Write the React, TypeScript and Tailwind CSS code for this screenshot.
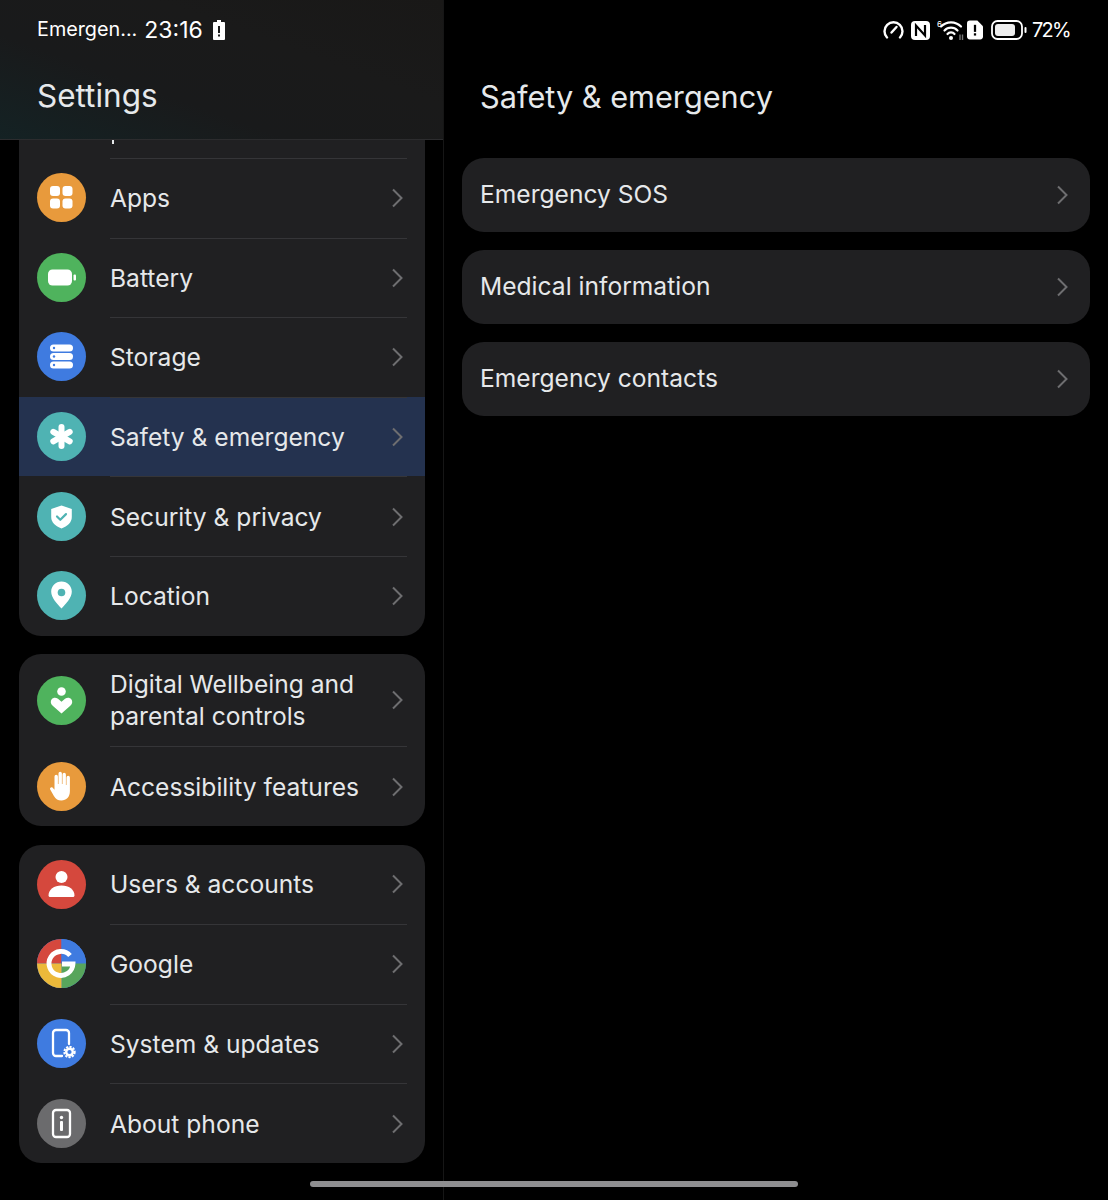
import type { ReactNode } from "react"

// Small glyphs that sit inside the round setting icons (49 unit box)
const glyphs: Record<string, ReactNode> = {
  apps: (
    <g fill="#fff">
      <rect x="13" y="13" width="10" height="10" rx="3" />
      <rect x="25.500" y="13" width="10" height="10" rx="3" />
      <rect x="13" y="25.500" width="10" height="10" rx="3" />
      <rect x="25.500" y="25.500" width="10" height="10" rx="3" />
    </g>
  ),
  battery: (
    <g fill="#fff">
      <rect x="11" y="16.500" width="24" height="16" rx="4.500" />
      <rect x="36.500" y="21.500" width="2.500" height="6" rx="1" />
    </g>
  ),
  storage: (
    <g>
      <rect x="13" y="12.500" width="23" height="7" rx="3.500" fill="#fff" />
      <rect x="13" y="21" width="23" height="7" rx="3.500" fill="#fff" />
      <rect x="13" y="29.500" width="23" height="7" rx="3.500" fill="#fff" />
      <circle cx="17" cy="16" r="1.200" fill="#3f7be0" />
      <circle cx="17" cy="24.500" r="1.200" fill="#3f7be0" />
      <circle cx="17" cy="33" r="1.200" fill="#3f7be0" />
    </g>
  ),
  safety: (
    <g stroke="#fff" strokeWidth="6" strokeLinecap="round">
      <path d="M24.500 15v19" />
      <path d="M16.300 19.800l16.400 9.500" />
      <path d="M16.300 29.300l16.400-9.500" />
    </g>
  ),
  security: (
    <g>
      <path d="M24.500 13.500l10.300 3.500v8c0 5.500-4.300 9.200-10.300 11.500-6-2.300-10.300-6-10.300-11.500v-8z" fill="#fff" />
      <path d="M20 24.500l3.300 3.300 5.700-5.700" fill="none" stroke="#4fb3b3" strokeWidth="2.200" strokeLinecap="round" strokeLinejoin="round" />
    </g>
  ),
  location: (
    <g>
      <path d="M24.500 10.500c-5.900 0-10.300 4.400-10.300 10.200 0 6.300 6 12 10.300 16.800 4.300-4.800 10.300-10.500 10.300-16.800 0-5.800-4.400-10.200-10.300-10.200z" fill="#fff" />
      <circle cx="24.500" cy="21.500" r="3.800" fill="#4fb3b3" />
    </g>
  ),
  wellbeing: (
    <g fill="#fff">
      <circle cx="24.500" cy="15.500" r="4.300" />
      <path d="M24.500 37.500l-8.800-7.700c-2.200-2-2.500-4.700-1-6.600 1.600-2 4.300-2 6.300-.4l3.500 3 3.500-3c2-1.600 4.700-1.600 6.300.4 1.500 1.900 1.200 4.600-1 6.600z" />
    </g>
  ),
  hand: (
    <path
      d="M17.500 21v-6.500a1.700 1.700 0 0 1 3.400 0V22h.6V11.500a1.700 1.700 0 0 1 3.400 0V22h.6V12.500a1.700 1.700 0 0 1 3.400 0V23h.6v-7.500a1.700 1.700 0 0 1 3.400 0V29c0 6-3.500 9.500-8.500 9.500-3.500 0-5.700-1.500-7.500-4.500l-3.700-6.500c-.9-1.600 1.300-3 2.500-1.700l1.800 2z"
      fill="#fff"
    />
  ),
  user: (
    <g fill="#fff">
      <circle cx="24.500" cy="17" r="6" />
      <path d="M13 37c-.8 0-1.500-.7-1.500-1.500 0-6 5.500-10 13-10s13 4 13 10c0 .8-.7 1.500-1.500 1.500z" />
    </g>
  ),
  google: (
    <g>
      <path d="M24.500 0A24.500 24.500 0 0 0 0 24.500h24.500z" fill="#d5483d" />
      <path d="M24.500 0A24.500 24.500 0 0 1 49 24.500H24.500z" fill="#3f7be0" />
      <path d="M49 24.500A24.500 24.500 0 0 1 24.500 49V24.500z" fill="#57a55c" />
      <path d="M24.500 49A24.500 24.500 0 0 1 0 24.500h24.500z" fill="#ecb93a" />
      <path d="M33 16.500A12 12 0 1 0 36 25h-11" fill="none" stroke="#fff" strokeWidth="4.800" />
    </g>
  ),
  system: (
    <g>
      <path d="M25 37h-6a3 3 0 0 1-3-3V14a3 3 0 0 1 3-3h10a3 3 0 0 1 3 3v11" fill="none" stroke="#fff" strokeWidth="2.300" strokeLinecap="round" />
      <circle cx="32.500" cy="33" r="5.200" fill="none" stroke="#fff" strokeWidth="2" strokeDasharray="2.200 1.200" />
      <circle cx="32.500" cy="33" r="3.300" fill="none" stroke="#fff" strokeWidth="2.400" />
    </g>
  ),
  about: (
    <g>
      <rect x="16" y="11" width="17" height="27" rx="3" fill="none" stroke="#fff" strokeWidth="2.300" />
      <circle cx="24.500" cy="18.500" r="1.700" fill="#fff" />
      <rect x="23" y="22" width="3" height="10" rx="1" fill="#fff" />
    </g>
  ),
}

const rowsA = [
  { title: "Apps", icon: "apps", color: "bg-[#e89a3c]" },
  { title: "Battery", icon: "battery", color: "bg-[#4fb35d]" },
  { title: "Storage", icon: "storage", color: "bg-[#3f7be0]" },
  { title: "Safety & emergency", icon: "safety", color: "bg-[#4fb3b3]", active: true },
  { title: "Security & privacy", icon: "security", color: "bg-[#4fb3b3]" },
  { title: "Location", icon: "location", color: "bg-[#4fb3b3]" },
]

const rowsB = [
  { title: "Users & accounts", icon: "user", color: "bg-[#d5483d]" },
  { title: "Google", icon: "google", color: "bg-[#3f7be0]" },
  { title: "System & updates", icon: "system", color: "bg-[#3f7be0]" },
  { title: "About phone", icon: "about", color: "bg-[#6b6b6d]" },
]

function Chevron({ className }: { className?: string }) {
  return (
    <svg width="13" height="20" viewBox="0 0 13 20" className={className}>
      <path d="M2 1.500L10.500 10 2 18.500" fill="none" stroke="#6e6e70" strokeWidth="2" />
    </svg>
  )
}

function SettingRow({
  title,
  icon,
  color,
  active,
  first,
  tall,
}: {
  title: ReactNode
  icon: string
  color: string
  active?: boolean
  first?: boolean
  tall?: boolean
}) {
  return (
    <div className={`flex items-center pl-[18px] ${tall ? "h-[92px]" : "h-[79.6px]"} ${active ? "bg-[#24324f]" : ""}`}>
      <div className={`h-[49px] w-[49px] shrink-0 rounded-full ${color}`}>
        <svg width="49" height="49" viewBox="0 0 49 49">
          {glyphs[icon]}
        </svg>
      </div>
      <div
        className={`ml-[24px] mr-[18px] flex h-full flex-1 items-center justify-between ${
          first ? "" : "border-t border-[#353538]"
        }`}
      >
        <span className="text-[24.600px] leading-[32px] text-[#e6e8ea]">{title}</span>
        <Chevron className="mr-[3px]" />
      </div>
    </div>
  )
}

function LeftStatus() {
  return (
    <div className="flex h-[60px] items-center pl-[37px]">
      <span className="text-[19.800px] text-white">Emergen...</span>
      <span className="ml-[7px] text-[23px] text-white">23:16</span>
      <svg width="12" height="20" viewBox="0 0 12 20" className="ml-[10px]">
        <path d="M4 0h4v2h3a1 1 0 0 1 1 1v16a1 1 0 0 1-1 1H1a1 1 0 0 1-1-1V3a1 1 0 0 1 1-1h3z" fill="#fff" />
        <rect x="5" y="6" width="2" height="7" fill="#1a1a1a" />
        <rect x="5" y="14.500" width="2" height="2" fill="#1a1a1a" />
      </svg>
    </div>
  )
}

function RightStatus() {
  return (
    <div className="flex h-[60px] items-center justify-end pr-[38px]">
      <svg width="21" height="18" viewBox="0 0 21 18">
        <path d="M4 16.500A9 9 0 1 1 17 16.500" fill="none" stroke="#fff" strokeWidth="2.400" strokeLinecap="round" />
        <path d="M8.500 11.500L13.500 6" stroke="#fff" strokeWidth="2.400" strokeLinecap="round" />
      </svg>
      <svg width="19" height="19" viewBox="0 0 19 19" className="ml-[7px]">
        <rect width="19" height="19" rx="4" fill="#fff" />
        <path d="M5 15V4.500L14 14.500V4" fill="none" stroke="#000" strokeWidth="2.200" />
      </svg>
      <svg width="29" height="22" viewBox="0 0 29 22" className="ml-[6px]">
        <path d="M5 7.500a14 14 0 0 1 20 0M8.500 11.500a9 9 0 0 1 13 0M11.500 15a4.500 4.500 0 0 1 7 0" fill="none" stroke="#fff" strokeWidth="2.200" strokeLinecap="round" />
        <circle cx="15" cy="19" r="2" fill="#fff" />
        <text x="1" y="8" fontSize="8" fill="#fff">
          6
        </text>
        <path d="M24 15.500v5.500M26.500 15.500v5.500" stroke="#777" strokeWidth="1.400" />
      </svg>
      <svg width="16" height="20" viewBox="0 0 17 20" className="ml-[2px]">
        <path d="M3 0h8l6 6v11a3 3 0 0 1-3 3H3a3 3 0 0 1-3-3V3a3 3 0 0 1 3-3z" fill="#fff" />
        <rect x="7.300" y="4.500" width="2.400" height="7.500" fill="#000" />
        <rect x="7.300" y="13.500" width="2.400" height="2.400" fill="#000" />
      </svg>
      <svg width="36" height="20" viewBox="0 0 36 20" className="ml-[8px]">
        <rect x="1" y="1" width="30" height="18" rx="5.500" fill="none" stroke="#fff" strokeWidth="1.800" />
        <rect x="4" y="4" width="20" height="12" rx="3" fill="#eee" />
        <rect x="33.500" y="7" width="2" height="6" rx="1" fill="#fff" />
      </svg>
      <span className="ml-[5px] text-[20px] tracking-[-1.700px] text-white">72%</span>
    </div>
  )
}

export default function App() {
  return (
    <div className="relative flex h-[1200px] w-[1108px] overflow-hidden bg-black font-['Inter',sans-serif]">
      {/* settings list */}
      <div className="h-full w-[444px] border-r border-[#161616]">
        <div className="h-[140px] border-b border-[#2c2c2e] bg-[linear-gradient(20deg,#142224_0%,#191a1b_35%,#1a1a1a_65%,#191817_100%)]">
          <LeftStatus />
          <h1 className="pl-[37px] pt-[14px] text-[31.500px] leading-[44px] text-[#e6e9eb]">Settings</h1>
        </div>

        <div className="ml-[19px] mr-[18px] flex flex-col gap-[18.700px]">
          <div className="overflow-hidden rounded-b-[22px] bg-[#202022]">
            <div className="h-[18px] pl-[93px]">
              <div className="h-[4px] w-[2px] bg-[#e6e8ea]" />
            </div>
            {rowsA.map((row) => (
              <SettingRow key={row.title} {...row} />
            ))}
          </div>

          <div className="overflow-hidden rounded-[22px] bg-[#202022]">
            <SettingRow
              first
              tall
              icon="wellbeing"
              color="bg-[#4fb35d]"
              title={
                <>
                  Digital Wellbeing and
                  <br />
                  parental controls
                </>
              }
            />
            <SettingRow title="Accessibility features" icon="hand" color="bg-[#e89a3c]" />
          </div>

          <div className="overflow-hidden rounded-[22px] bg-[#202022]">
            {rowsB.map((row, i) => (
              <SettingRow key={row.title} first={i === 0} {...row} />
            ))}
          </div>
        </div>
      </div>

      {/* detail pane */}
      <div className="flex-1">
        <RightStatus />
        <h2 className="pl-[36px] pt-[15px] text-[30.700px] leading-[44px] text-[#e6e9eb]">Safety & emergency</h2>
        <div className="mt-[39px] flex flex-col gap-[18.500px] pl-[18px] pr-[18px]">
          {["Emergency SOS", "Medical information", "Emergency contacts"].map((title) => (
            <div key={title} className="flex h-[73.500px] items-center justify-between rounded-[22px] bg-[#202022] pl-[18px] pr-[21px]">
              <span className="text-[24.600px] text-[#e6e8ea]">{title}</span>
              <Chevron />
            </div>
          ))}
        </div>
      </div>

      {/* gesture handle */}
      <div className="absolute bottom-[13px] left-[310px] h-[6px] w-[488px] rounded-full bg-[#8e8e90]" />
    </div>
  )
}
